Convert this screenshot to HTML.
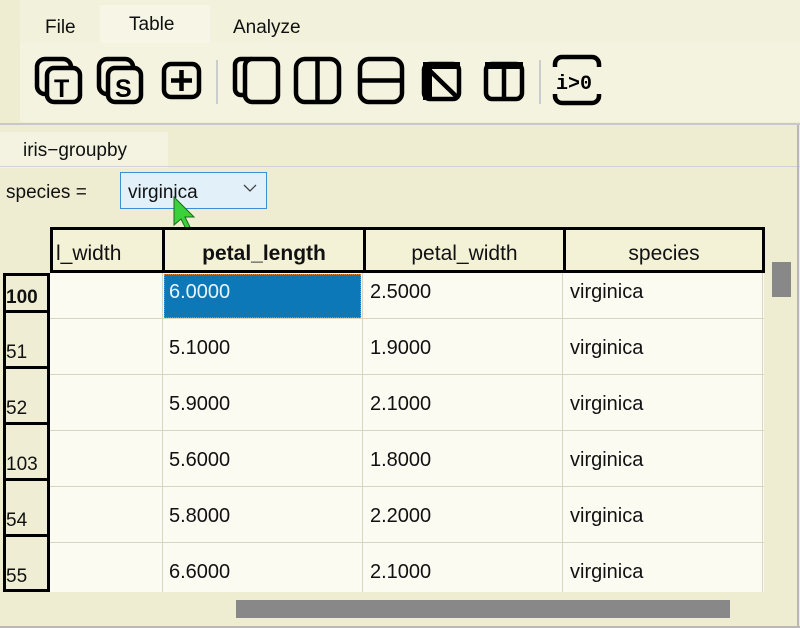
<!DOCTYPE html>
<html><head><meta charset="utf-8"><style>
body{margin:0;width:800px;height:628px;overflow:hidden;background:#eeedd2;font-family:"Liberation Sans","Noto Sans CJK JP",sans-serif;position:relative;color:#111}
.a{position:absolute}
.tab{position:absolute;font-size:19px;top:17px}
.hd{position:absolute;top:227px;height:40px;border:3px solid #000;background:#f3f1d6;font-size:21px;text-align:center;line-height:48px}
.rh{position:absolute;left:3px;width:41px;border:3px solid #000;background:#efeed4;font-size:19px}
.c{position:absolute;font-size:20px}
.vl{position:absolute;width:1px;background:#d8d6c0}
.hl{position:absolute;height:1px;background:#d8d6c0;left:50px;width:714px}
</style></head><body>
<div class="a" style="left:20px;top:0;width:780px;height:122px;background:#f2f1db"></div>
<div class="a" style="left:20px;top:42px;width:780px;height:80px;background:#f4f3e0"></div>
<div class="a" style="left:100px;top:5px;width:110px;height:38px;background:#f6f5e6"></div>
<div class="tab" style="left:45px">File</div>
<div class="tab" style="left:129px;top:14px">Table</div>
<div class="tab" style="left:233px">Analyze</div>
<svg class="a" style="left:0;top:0" width="800" height="125">
<g fill="none" stroke="#000" stroke-width="4.5">
<rect x="37" y="59" width="34" height="35" rx="8"/><rect x="47" y="68" width="33" height="34" rx="7" fill="#f4f3e0"/>
<rect x="99" y="59" width="34" height="35" rx="8"/><rect x="108" y="68" width="33" height="34" rx="7" fill="#f4f3e0"/>
<rect x="164" y="64" width="35" height="33" rx="7"/>
<path d="M181.5 70v21M171 80.5h21"/>
<rect x="235" y="59" width="22" height="36" rx="6"/><rect x="245" y="59" width="33" height="43" rx="7" fill="#f4f3e0"/>
<rect x="296" y="59" width="43" height="43" rx="9"/><path d="M317.5 59v43"/>
<rect x="360" y="59" width="42" height="43" rx="9"/><path d="M360 80.5h42"/>
<rect x="424" y="64" width="35" height="35" rx="6"/><path d="M425 66l33 32"/>
<rect x="486" y="64" width="36" height="35" rx="6"/><path d="M504 66v32"/>
<path d="M555 67v-3a7 7 0 0 1 7-7h30a7 7 0 0 1 7 7v3M555 94v2a7 7 0 0 0 7 7h30a7 7 0 0 0 7-7v-2"/>
</g>
<rect x="423" y="62" width="37" height="7" fill="#000"/><rect x="423" y="62" width="9" height="38" fill="#000"/>
<rect x="485" y="62" width="38" height="7" fill="#000"/>
<text x="54" y="97" font-size="25" font-weight="bold" font-family="Liberation Sans">T</text>
<text x="115" y="97" font-size="25" font-weight="bold" font-family="Liberation Sans">S</text>
<text x="556" y="89" font-size="20" font-weight="bold" font-family="Liberation Mono">i&gt;0</text>
<path d="M217 60v44M540 60v44" stroke="#ccc" stroke-width="2"/>
<path d="M0 124h800" stroke="#c8c8cc" stroke-width="2"/>
</svg>
<div class="a" style="left:0;top:132px;width:168px;height:36px;background:#f4f3e2"></div>
<div class="a" style="left:0;top:166px;width:800px;height:1px;background:#cfd0d8"></div>
<div class="a" style="left:23px;top:140px;font-size:19px">iris−groupby</div>
<div class="a" style="left:6px;top:182px;font-size:19px">species =</div>
<div class="a" style="left:120px;top:172px;width:145px;height:35px;border:1px solid #3c8fd6;background:#e2f0fa"></div>
<div class="a" style="left:128px;top:182px;font-size:19px">virginica</div>
<svg class="a" style="left:243px;top:183px" width="14" height="10"><path d="M1 2l6 6 6-6" stroke="#444" fill="none" stroke-width="1.3"/></svg>
<svg class="a" style="left:172px;top:195px" width="30" height="40"><path d="M2 2v28l7-6 5 10 4-2-5-10h9z" fill="#3bd13b" stroke="#1a6a1a" stroke-width="1"/></svg>
<div class="a" style="left:50px;top:273px;width:714px;height:319px;background:#fbfbf2"></div>
<div class="hd" style="left:50px;text-align:left;padding-left:3px;width:106px">l_width</div>
<div class="hd" style="left:162px;width:198px;font-weight:bold">petal_length</div>
<div class="hd" style="left:363px;width:197px">petal_width</div>
<div class="hd" style="left:563px;width:196px">species</div>
<div class="vl" style="left:162px;top:273px;height:319px"></div>
<div class="vl" style="left:362px;top:273px;height:319px"></div>
<div class="vl" style="left:562px;top:273px;height:319px"></div>
<div class="vl" style="left:762px;top:273px;height:319px"></div>
<div class="hl" style="top:318px"></div><div class="hl" style="top:374px"></div><div class="hl" style="top:430px"></div><div class="hl" style="top:486px"></div><div class="hl" style="top:542px"></div>
<div class="a" style="left:164px;top:274px;width:195px;height:42px;background:#0c78b8;border:1px dotted #e08030"></div>
<div class="rh" style="top:273px;height:40px;line-height:44px;font-weight:bold">100</div>
<div class="rh" style="top:310px;height:59px;line-height:80px">51</div>
<div class="rh" style="top:366px;height:59px;line-height:80px">52</div>
<div class="rh" style="top:422px;height:59px;line-height:80px">103</div>
<div class="rh" style="top:478px;height:59px;line-height:80px">54</div>
<div class="rh" style="top:534px;height:52px;line-height:80px;overflow:hidden">55</div>
<div class="c" style="left:169px;top:281px;color:#e8f4ff">6.0000</div>
<div class="c" style="left:370px;top:281px">2.5000</div>
<div class="c" style="left:570px;top:281px">virginica</div>
<div class="c" style="left:169px;top:337px">5.1000</div><div class="c" style="left:370px;top:337px">1.9000</div><div class="c" style="left:570px;top:337px">virginica</div>
<div class="c" style="left:169px;top:393px">5.9000</div><div class="c" style="left:370px;top:393px">2.1000</div><div class="c" style="left:570px;top:393px">virginica</div>
<div class="c" style="left:169px;top:449px">5.6000</div><div class="c" style="left:370px;top:449px">1.8000</div><div class="c" style="left:570px;top:449px">virginica</div>
<div class="c" style="left:169px;top:505px">5.8000</div><div class="c" style="left:370px;top:505px">2.2000</div><div class="c" style="left:570px;top:505px">virginica</div>
<div class="c" style="left:169px;top:561px">6.6000</div><div class="c" style="left:370px;top:561px">2.1000</div><div class="c" style="left:570px;top:561px">virginica</div>
<div class="a" style="left:772px;top:262px;width:19px;height:35px;background:#888"></div>
<div class="a" style="left:236px;top:600px;width:494px;height:18px;background:#888"></div>
<div class="a" style="left:797px;top:125px;width:2px;height:503px;background:#b8b8b8"></div>
<div class="a" style="left:0;top:626px;width:800px;height:2px;background:#b8b8b8"></div>
</body></html>
